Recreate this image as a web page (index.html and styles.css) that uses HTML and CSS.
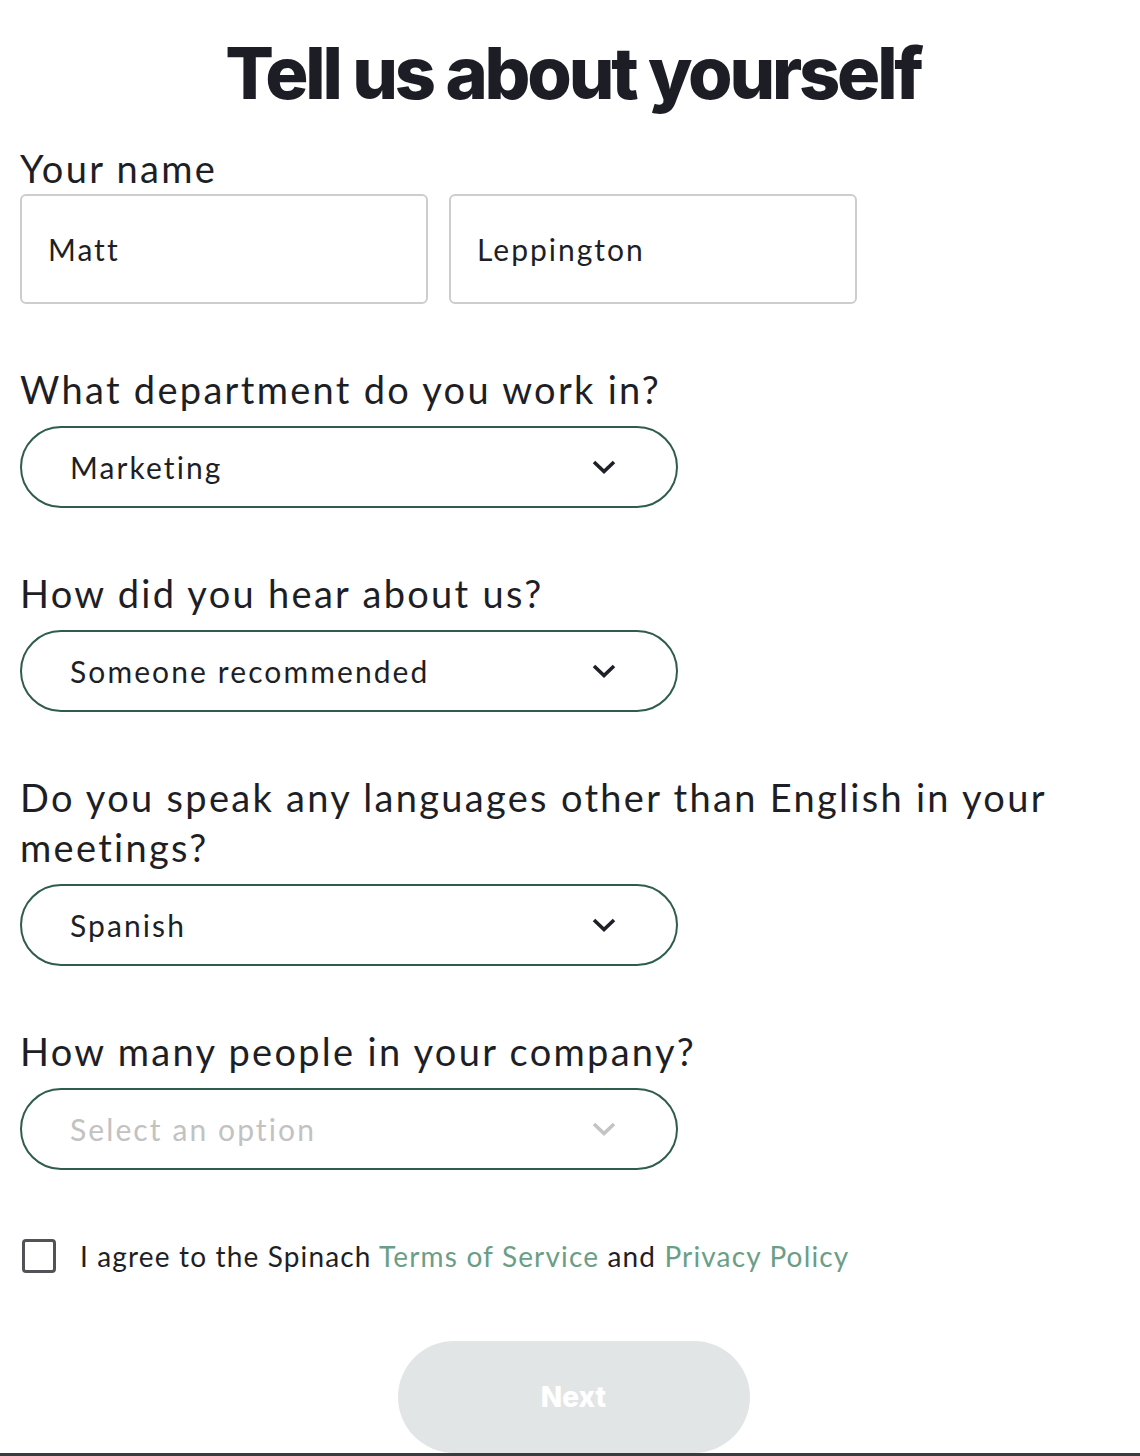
FILE: index.html
```html
<!DOCTYPE html>
<html lang="en">
<head>
    <meta charset="UTF-8">
    <meta name="viewport" content="width=device-width, initial-scale=1.0">
    <title>Tell us about yourself</title>
    <link rel="stylesheet" href="styles.css">
</head>
<body>

    <div class="page">
        <h1>Tell us about yourself</h1>

        <form class="onboarding">
            <!-- Nome -->
            <div class="field field-name">
                <label>Your name</label>
                <div class="name-row">
                    <input type="text" class="text-input" value="Matt">
                    <input type="text" class="text-input" value="Leppington">
                </div>
            </div>

            <div class="field">
                <label>What department do you work in?</label>
                <div class="select-wrap">
                    <select class="select">
                        <option>Marketing</option>
                    </select>
                    <svg class="chevron" viewBox="0 0 24 14"><path d="M2 2 L12 11.5 L22 2" /></svg>
                </div>
            </div>

            <div class="field">
                <label>How did you hear about us?</label>
                <div class="select-wrap">
                    <select class="select">
                        <option>Someone recommended</option>
                    </select>
                    <svg class="chevron" viewBox="0 0 24 14"><path d="M2 2 L12 11.5 L22 2" /></svg>
                </div>
            </div>

            <div class="field">
                <label>Do you speak any languages other than English in your meetings?</label>
                <div class="select-wrap">
                    <select class="select">
                        <option>Spanish</option>
                    </select>
                    <svg class="chevron" viewBox="0 0 24 14"><path d="M2 2 L12 11.5 L22 2" /></svg>
                </div>
            </div>

            <div class="field">
                <label>How many people in your company?</label>
                <div class="select-wrap">
                    <select class="select placeholder">
                        <option>Select an option</option>
                    </select>
                    <svg class="chevron light" viewBox="0 0 24 14"><path d="M2 2 L12 11.5 L22 2" /></svg>
                </div>
            </div>

            <label class="agree">
                <input type="checkbox" class="checkbox">
                <span>I agree to the Spinach <a href="#">Terms of Service</a> and <a href="#">Privacy Policy</a></span>
            </label>

            <div class="actions">
                <button type="button" class="btn-next" disabled>Next</button>
            </div>
        </form>
    </div>

    <div class="bottom-bar"></div>

</body>
</html>
```

FILE: styles.css
```css
/* Estilos gerais */
body {
    font-family: Lato, "Open Sans", sans-serif;
    background-color: #fff;
    color: #1e1f26;
    margin: 0;
    padding: 0;
}

.page {
    width: 1100px;
    padding: 0 20px;
}

h1 {
    font-family: Inter, sans-serif;
    font-weight: 800;
    font-size: 72px;
    letter-spacing: -3.2px;
    line-height: 86px;
    text-align: center;
    color: #1d1e25;
    margin: 30px 0 0;
    padding-left: 6px;
}

.field {
    margin-bottom: 60px;
}

.field label {
    display: block;
    font-size: 38px;
    line-height: 50px;
    letter-spacing: 2.3px;
    font-weight: 400;
    margin-bottom: 12px;
}

.field-name {
    margin-top: 27px;
}

.field-name label {
    margin-bottom: 1px;
}

.name-row {
    display: flex;
    gap: 21px;
}

.text-input {
    width: 408px;
    height: 110px;
    box-sizing: border-box;
    border: 2px solid #cdcdcd;
    border-radius: 6px;
    padding: 0 26px;
    font-family: inherit;
    font-size: 30px;
    letter-spacing: 2px;
    color: #1e1f26;
    outline: none;
}

.select-wrap {
    position: relative;
    width: 658px;
}

.select {
    appearance: none;
    -webkit-appearance: none;
    width: 100%;
    height: 82px;
    box-sizing: border-box;
    border: 2px solid #2f5d4b;
    border-radius: 41px;
    background-color: #fff;
    padding: 0 48px;
    font-family: inherit;
    font-size: 30px;
    letter-spacing: 2.1px;
    color: #1e1f26;
    outline: none;
}

.select.placeholder {
    color: #c2c2c2;
}

.chevron {
    position: absolute;
    right: 62px;
    top: 34px;
    width: 24px;
    height: 14px;
    fill: none;
    stroke: #1f2128;
    stroke-width: 3.6;
}

.chevron.light {
    stroke: #c4c4c4;
}

.agree {
    display: flex;
    align-items: center;
    gap: 24px;
    font-size: 28px;
    letter-spacing: 1.15px;
    padding-top: 9px;
    margin-left: 2px;
}

.checkbox {
    appearance: none;
    -webkit-appearance: none;
    width: 34px;
    height: 34px;
    margin: 0;
    border: 3.5px solid #525257;
    border-radius: 4px;
    box-sizing: border-box;
}

.agree a {
    color: #6a9e86;
    text-decoration: none;
}

.actions {
    display: flex;
    justify-content: center;
    margin-top: 68px;
    padding-left: 7px;
}

.btn-next {
    width: 352px;
    height: 112px;
    border: none;
    border-radius: 56px;
    background-color: #e2e5e6;
    color: #fff;
    font-family: Inter, sans-serif;
    font-weight: 800;
    font-size: 28px;
}

.bottom-bar {
    height: 4px;
    background-color: #3a3a3f;
}
```
